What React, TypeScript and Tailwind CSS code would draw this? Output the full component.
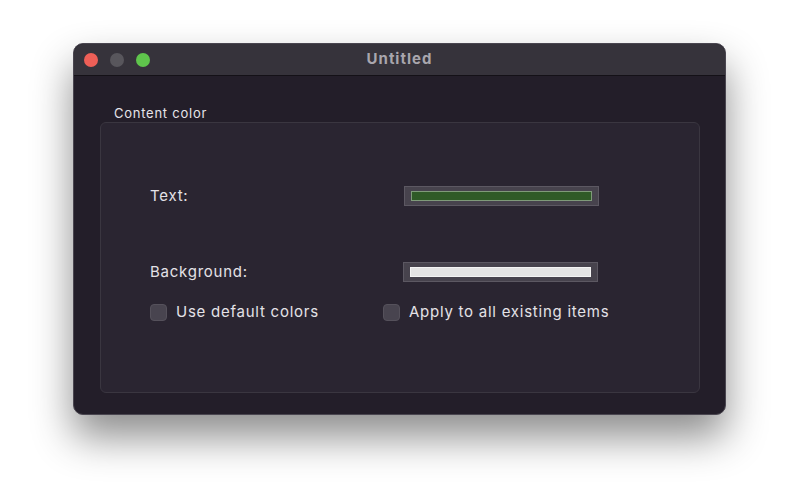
import React from 'react';

const font = { fontFamily: 'Inter, "Noto Sans", sans-serif' };

const ColorWell = ({ swatch }: { swatch: string }) => (
  <div className="w-[195px] h-[20px] bg-[#47434d] border border-[#5c5862] p-[4px] px-[6px] flex">
    <div className={`flex-1 border ${swatch}`} />
  </div>
);

const Checkbox = ({ label }: { label: string }) => (
  <label className="flex items-center gap-[9px]">
    <span className="w-[17px] h-[17px] rounded-[4px] bg-[#48444f] border border-[#55515b]" />
    <span className="text-[15px] text-[#e4e2e7] tracking-[0.75px]">{label}</span>
  </label>
);

export default function App() {
  return (
    <div className="w-[800px] h-[500px] bg-white pt-[43px] pl-[73px]" style={font}>
      <div className="w-[653px] h-[372px] rounded-[10px] bg-[#231e29] border border-[#4a4650] overflow-hidden shadow-[0_22px_40px_rgba(0,0,0,0.45)] flex flex-col">
        <div className="h-[32px] bg-[#36333b] border-b border-[#141117] flex items-center px-[10px] relative">
          <div className="flex gap-[12px]">
            <span className="w-[14px] h-[14px] rounded-full bg-[#ee5f57]" />
            <span className="w-[14px] h-[14px] rounded-full bg-[#58565c]" />
            <span className="w-[14px] h-[14px] rounded-full bg-[#5fc54c]" />
          </div>
          <div className="absolute inset-0 flex items-center justify-center text-[15px] font-bold tracking-[1px] text-[#a9a6ad]">
            Untitled
          </div>
        </div>
        <div className="flex-1 flex flex-col pl-[26px] pr-[25px] pb-[21px]">
          <div className="pt-[28px] pl-[14px] text-[13px] text-[#e6e4e9] tracking-[0.75px] leading-[18px] h-[46px]">Content color</div>
          <div className="flex-1 rounded-[6px] bg-[#2a2531] border border-[#3a3640] pl-[49px] pt-[63px]">
            <div className="flex items-center h-[20px]">
              <span className="w-[254px] text-[15px] text-[#e4e2e7] tracking-[0.75px]">Text:</span>
              <ColorWell swatch="bg-[#2f5a27] border-[#7f9a7a]" />
            </div>
            <div className="flex items-center h-[20px] mt-[56px]">
              <span className="w-[253px] text-[15px] text-[#e4e2e7] tracking-[0.75px]">Background:</span>
              <ColorWell swatch="bg-[#e4e4e4] border-[#f4f4f4]" />
            </div>
            <div className="flex items-center mt-[21px] h-[18px]">
              <div className="w-[233px]">
                <Checkbox label="Use default colors" />
              </div>
              <Checkbox label="Apply to all existing items" />
            </div>
          </div>
        </div>
      </div>
    </div>
  );
}
